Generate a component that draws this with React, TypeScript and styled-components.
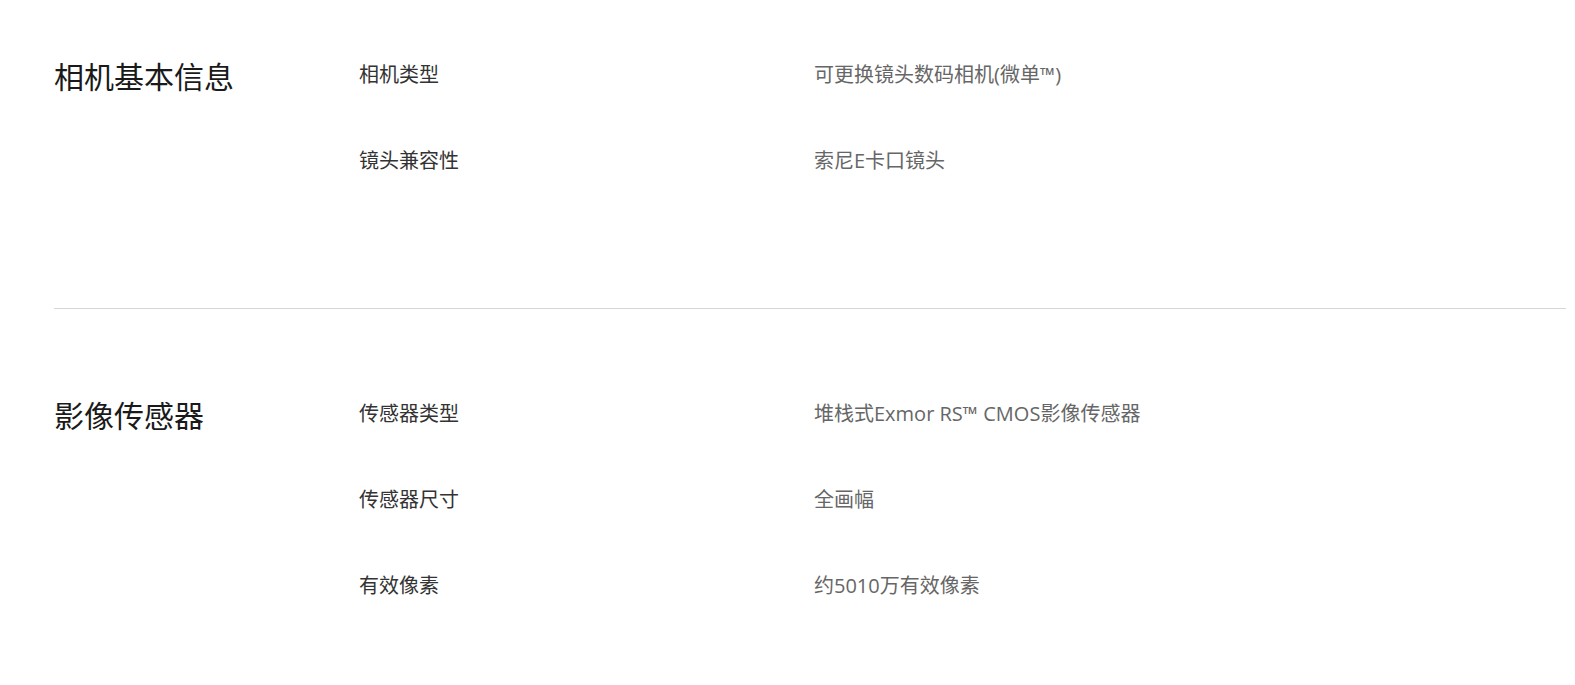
import React from "react";
import styled, { createGlobalStyle } from "styled-components";

const Global = createGlobalStyle`
  html, body { margin: 0; padding: 0; background: #fff; }
  body { font-family: "Open Sans", "Noto Sans CJK SC", "Microsoft YaHei", sans-serif; }
`;

const Page = styled.div`
  padding: 0 9px 0 54px;
`;

const Section = styled.section<{ $top: number; $bottom: number; $divider?: boolean }>`
  display: grid;
  grid-template-columns: 305px 1fr;
  padding-top: ${(p) => p.$top}px;
  padding-bottom: ${(p) => p.$bottom}px;
  border-bottom: ${(p) => (p.$divider ? "1px solid #d6d6d6" : "none")};
`;

const Heading = styled.h2`
  margin: 2px 0 0;
  font-size: 30px;
  line-height: 28px;
  font-weight: 400;
  color: #1a1a1a;
  white-space: nowrap;
`;

const Rows = styled.div`
  display: flex;
  flex-direction: column;
  gap: 58px;
`;

const Row = styled.div`
  display: grid;
  grid-template-columns: 455px 1fr;
  height: 28px;
  align-items: center;
`;

const Label = styled.div`
  font-size: 20px;
  line-height: 28px;
  color: #333;
`;

const Value = styled.div`
  font-size: 20px;
  line-height: 28px;
  color: #666;
`;

const sections = [
  {
    title: "相机基本信息",
    top: 61,
    bottom: 133,
    divider: true,
    rows: [
      ["相机类型", "可更换镜头数码相机(微单™)"],
      ["镜头兼容性", "索尼E卡口镜头"],
    ],
  },
  {
    title: "影像传感器",
    top: 91,
    bottom: 86,
    divider: false,
    rows: [
      ["传感器类型", "堆栈式Exmor RS™ CMOS影像传感器"],
      ["传感器尺寸", "全画幅"],
      ["有效像素", "约5010万有效像素"],
    ],
  },
];

export default function App() {
  return (
    <>
      <Global />
      <Page>
        {sections.map((s) => (
          <Section key={s.title} $top={s.top} $bottom={s.bottom} $divider={s.divider}>
            <Heading>{s.title}</Heading>
            <Rows>
              {s.rows.map(([l, v]) => (
                <Row key={l}>
                  <Label>{l}</Label>
                  <Value>{v}</Value>
                </Row>
              ))}
            </Rows>
          </Section>
        ))}
      </Page>
    </>
  );
}
